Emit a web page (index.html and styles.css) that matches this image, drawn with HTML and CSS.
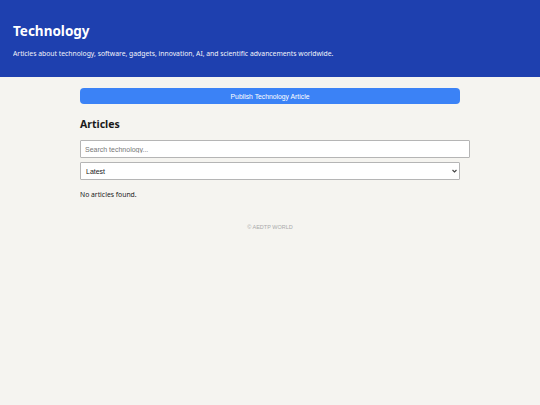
FILE: index.html
```html
<!DOCTYPE html>
<html lang="en">

<head>
    <meta charset="UTF-8">
    <meta name="viewport" content="width=device-width, initial-scale=1.0">
    <title>Technology</title>
    <link rel="stylesheet" href="styles.css">
</head>

<body>
    <header class="topic-header">
        <h1 class="topic-title">Technology</h1>
        <p class="topic-description">Articles about technology, software, gadgets, innovation, AI, and scientific advancements worldwide.</p>
    </header>

    <main class="topic-content">
        <button class="publish-btn">Publish Technology Article</button>

        <h2 class="section-title">Articles</h2>

        <input class="search-input" type="search" placeholder="Search technology...">
        <div class="select-wrap">
            <select class="sort-select">
                <option>Latest</option>
                <option>Oldest</option>
            </select>
            <svg class="select-arrow" width="5" height="4" viewBox="0 0 5 4">
                <path d="M0.5 1 L2.5 3 L4.5 1" fill="none" stroke="#444" stroke-width="1.1"/>
            </svg>
        </div>

        <p class="empty-text">No articles found.</p>
    </main>

    <footer class="site-footer">© AEDTP WORLD</footer>
</body>

</html>
```

FILE: styles.css
```css
* {
    margin: 0;
    padding: 0;
    box-sizing: border-box;
}

body {
    background-color: #f5f4f0;
    font-family: "Noto Sans", "Open Sans", sans-serif;
    color: #1a1a1a;
    min-height: 100vh;
}

.topic-header {
    background-color: #1e40af;
    color: white;
    height: 77px;
    padding: 22px 13px 0;
}

.topic-title {
    font-size: 13.5px;
    font-weight: 700;
    line-height: 18px;
}

.topic-description {
    margin-top: 9px;
    font-size: 6.8px;
    line-height: 10px;
    opacity: 0.95;
}

.topic-content {
    width: 380px;
    margin: 0 auto;
    padding-top: 11px;
}

.publish-btn {
    display: block;
    width: 100%;
    height: 16px;
    border: none;
    border-radius: 4px;
    background-color: #3b82f6;
    color: white;
    font-family: "Liberation Sans", Arial, sans-serif;
    font-size: 6.8px;
}

.section-title {
    margin-top: 13px;
    font-size: 10.5px;
    font-weight: 700;
    line-height: 14px;
}

.search-input {
    display: block;
    box-sizing: content-box;
    width: 100%;
    height: 16px;
    margin-top: 9px;
    padding: 0 4px;
    border: 1px solid #b5b5b5;
    border-radius: 1px;
    background-color: white;
    font-family: "Liberation Sans", Arial, sans-serif;
    font-size: 7px;
}

.search-input::placeholder {
    color: #777;
}

.select-wrap {
    position: relative;
    margin-top: 4px;
}

.sort-select {
    display: block;
    width: 100%;
    height: 18px;
    padding: 0 5px;
    border: 1px solid #b5b5b5;
    border-radius: 1px;
    background-color: white;
    color: #1a1a1a;
    font-family: "Liberation Sans", Arial, sans-serif;
    font-size: 7px;
    appearance: none;
    -webkit-appearance: none;
}

.select-arrow {
    position: absolute;
    right: 3px;
    top: 7px;
    pointer-events: none;
}

.empty-text {
    margin-top: 10px;
    font-size: 6.8px;
    line-height: 10px;
}

.site-footer {
    margin-top: 24px;
    text-align: center;
    font-family: "Liberation Sans", Arial, sans-serif;
    font-size: 5.5px;
    color: #aaa;
}
```
